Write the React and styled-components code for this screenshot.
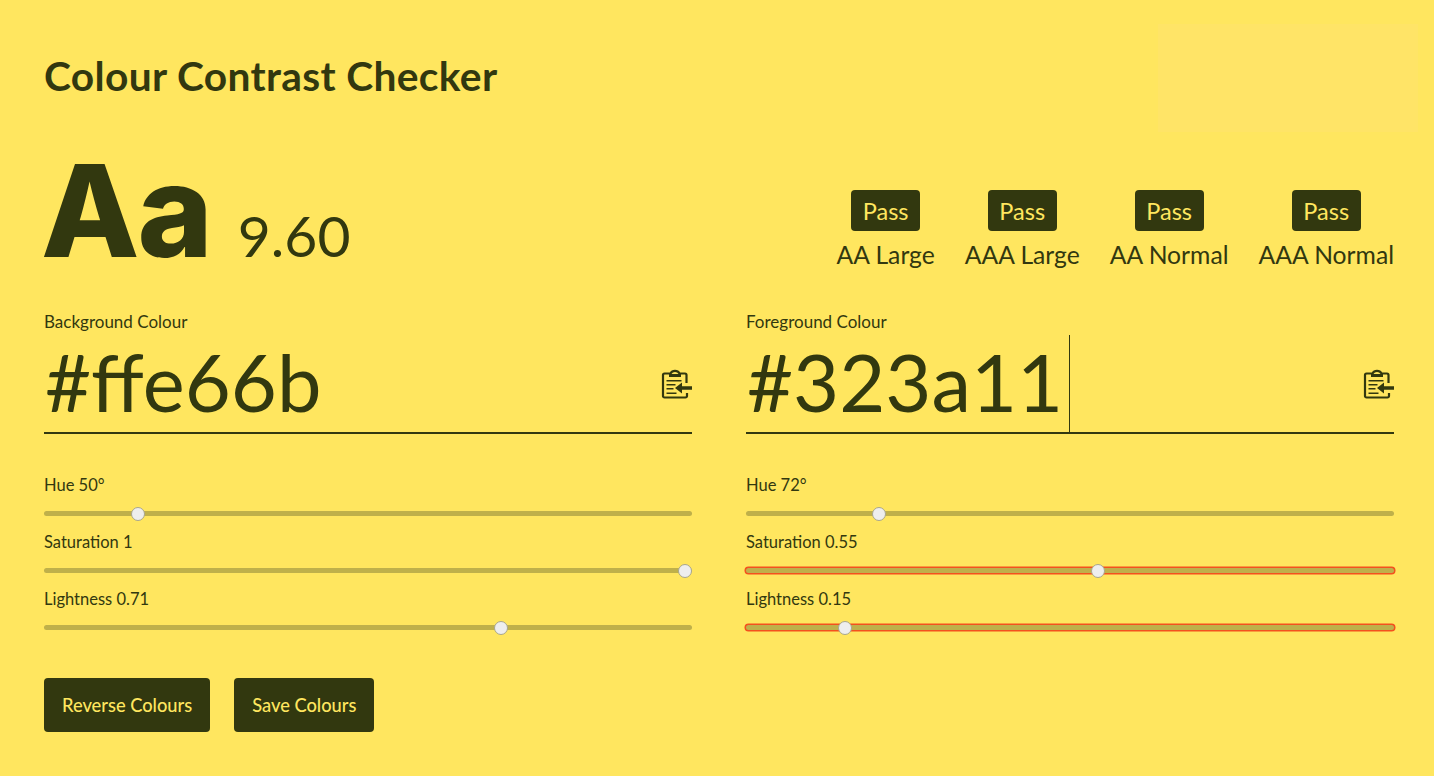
import React, { useState } from "react";
import styled, { createGlobalStyle } from "styled-components";

const GlobalStyle = createGlobalStyle`
  html, body {
    margin: 0;
    background: #ffe65f;
  }
  body {
    font-family: "Lato", "Noto Sans", sans-serif;
    color: #32380f;
  }
`;

const ClipboardIcon = () => (
  <svg width="31" height="31" viewBox="0 0 31 31" fill="none">
    <path
      d="M25.500 15v-8a1.500 1.500 0 0 0-1.500-1.500h-5.500a5 4.500 0 0 0-9 0h-6a1.500 1.500 0 0 0-1.500 1.500v21a1.500 1.500 0 0 0 1.500 1.500h21a1.500 1.500 0 0 0 1.500-1.500v-3"
      stroke="#32380f"
      strokeWidth="2.200"
    />
    <path d="M8 6h12v3h-12z" fill="#32380f" />
    <path
      d="M5.500 12h15v1.600h-15zM5.500 16h9v1.600h-9zM5.500 20h7v1.600h-7zM5.500 24.500h10v1.600h-10z"
      fill="#32380f"
    />
    <path d="M14 20l7-5.500v3.800h10v3.400h-10v3.800z" fill="#32380f" />
  </svg>
);

const Page = styled.main`
  box-sizing: border-box;
  min-height: 776px;
  padding: 24px 40px 44px 44px;
  background: #ffe65f;
`;

const Header = styled.header`
  display: flex;
  justify-content: space-between;
  align-items: center;
  height: 108px;
`;

const Title = styled.h1`
  margin: 0;
  padding-bottom: 3px;
  font-size: 40.700px;
  font-weight: 700;
  line-height: 1;
  letter-spacing: 0.35px;
`;

const AdSlot = styled.div`
  width: 260px;
  height: 108px;
  margin-right: -24px;
  background: #ffe467;
`;

const Summary = styled.section`
  display: flex;
  justify-content: space-between;
  align-items: flex-end;
  height: 117px;
  margin-top: 20px;
`;

const Score = styled.div`
  display: flex;
  align-items: baseline;
`;

const Sample = styled.span`
  font-family: "Inter", "Lato", sans-serif;
  font-size: 128px;
  font-weight: 800;
  line-height: 117px;
  letter-spacing: -2px;
  margin-left: -3px;
`;

const Ratio = styled.span`
  font-size: 57px;
  font-weight: 400;
  margin-left: 27px;
`;

const Results = styled.div`
  display: flex;
  gap: 30px;
  margin-bottom: -1px;
`;

const Result = styled.div`
  display: flex;
  flex-direction: column;
  align-items: center;
  gap: 9px;
`;

const Badge = styled.span`
  display: flex;
  align-items: center;
  justify-content: center;
  width: 69px;
  height: 41px;
  border-radius: 4px;
  background: #32380f;
  color: #ffe65f;
  font-size: 23.500px;
`;

const ResultLabel = styled.span`
  font-size: 24.700px;
  line-height: 30px;
`;

const Columns = styled.section`
  display: grid;
  grid-template-columns: 648px 648px;
  column-gap: 54px;
  margin-top: 43px;
`;

const Column = styled.div`
  display: flex;
  flex-direction: column;
`;

const FieldLabel = styled.label`
  font-size: 16.500px;
  line-height: 20px;
`;

const ColourLabel = styled(FieldLabel)`
  font-size: 17px;
`;

const HexRow = styled.div`
  display: flex;
  align-items: center;
  height: 99px;
  margin-top: 3px;
  margin-bottom: 41px;
  border-bottom: 2px solid #32380f;
  box-sizing: border-box;
`;

const HexValue = styled.span`
  font-size: 79.500px;
  line-height: 92px;
  padding: 0 0 4px 1px;
`;

const Caret = styled.span`
  width: 1px;
  height: 100%;
  margin-left: 6px;
  background: #32380f;
`;

const CopyButton = styled.button`
  display: flex;
  margin-left: auto;
  padding: 0;
  border: 0;
  background: none;
`;

const Slider = styled.div`
  display: flex;
  flex-direction: column;
  height: 57px;
`;

const SliderInput = styled.input`
  appearance: none;
  display: block;
  box-sizing: border-box;
  width: 100%;
  height: 5px;
  margin: 16px 0 0;
  border-radius: 3px;
  background: #bfb04a;
  outline: none;
  box-shadow: ${({ $invalid }) => ($invalid ? "0 0 0 1.500px #f4511e" : "none")};

  &::-webkit-slider-thumb {
    appearance: none;
    width: 14px;
    height: 14px;
    border-radius: 50%;
    border: 1px solid #a8a68c;
    background: #eeeeee;
  }
`;

const Actions = styled.div`
  display: flex;
  gap: 24px;
  margin-top: 32px;
`;

const ActionButton = styled.button`
  height: 54px;
  padding: 0 18px;
  border: 0;
  border-radius: 4px;
  background: #32380f;
  color: #ffe65f;
  font-family: inherit;
  font-size: 18.300px;
  font-weight: 500;
`;

const resultRows = ["AA Large", "AAA Large", "AA Normal", "AAA Normal"];

const colours = [
  {
    label: "Background Colour",
    hex: "#ffe66b",
    sliders: [
      { name: "Hue", text: "50°", value: 49.5, max: 360 },
      { name: "Saturation", text: "1", value: 1, max: 1 },
      { name: "Lightness", text: "0.71", value: 0.71, max: 1 },
    ],
  },
  {
    label: "Foreground Colour",
    hex: "#323a11",
    caret: true,
    sliders: [
      { name: "Hue", text: "72°", value: 71.6, max: 360 },
      { name: "Saturation", text: "0.55", value: 0.544, max: 1, invalid: true },
      { name: "Lightness", text: "0.15", value: 0.145, max: 1, invalid: true },
    ],
  },
];

const ColourColumn = ({ colour }) => (
  <Column>
    <ColourLabel>{colour.label}</ColourLabel>
    <HexRow>
      <HexValue>{colour.hex}</HexValue>
      {colour.caret && <Caret />}
      <CopyButton aria-label="Paste colour">
        <ClipboardIcon />
      </CopyButton>
    </HexRow>
    {colour.sliders.map((s) => (
      <Slider key={s.name}>
        <FieldLabel>
          {s.name} {s.text}
        </FieldLabel>
        <SliderInput
          type="range"
          min="0"
          max={s.max}
          step="any"
          defaultValue={s.value}
          $invalid={s.invalid}
        />
      </Slider>
    ))}
  </Column>
);

const App = () => {
  const [rows] = useState(colours);

  return (
    <>
      <GlobalStyle />
      <Page>
        <Header>
          <Title>Colour Contrast Checker</Title>
          <AdSlot />
        </Header>
        <Summary>
          <Score>
            <Sample>Aa</Sample>
            <Ratio>9.60</Ratio>
          </Score>
          <Results>
            {resultRows.map((r) => (
              <Result key={r}>
                <Badge>Pass</Badge>
                <ResultLabel>{r}</ResultLabel>
              </Result>
            ))}
          </Results>
        </Summary>
        <Columns>
          {rows.map((c) => (
            <ColourColumn key={c.label} colour={c} />
          ))}
        </Columns>
        <Actions>
          <ActionButton>Reverse Colours</ActionButton>
          <ActionButton>Save Colours</ActionButton>
        </Actions>
      </Page>
    </>
  );
};

export default App;
